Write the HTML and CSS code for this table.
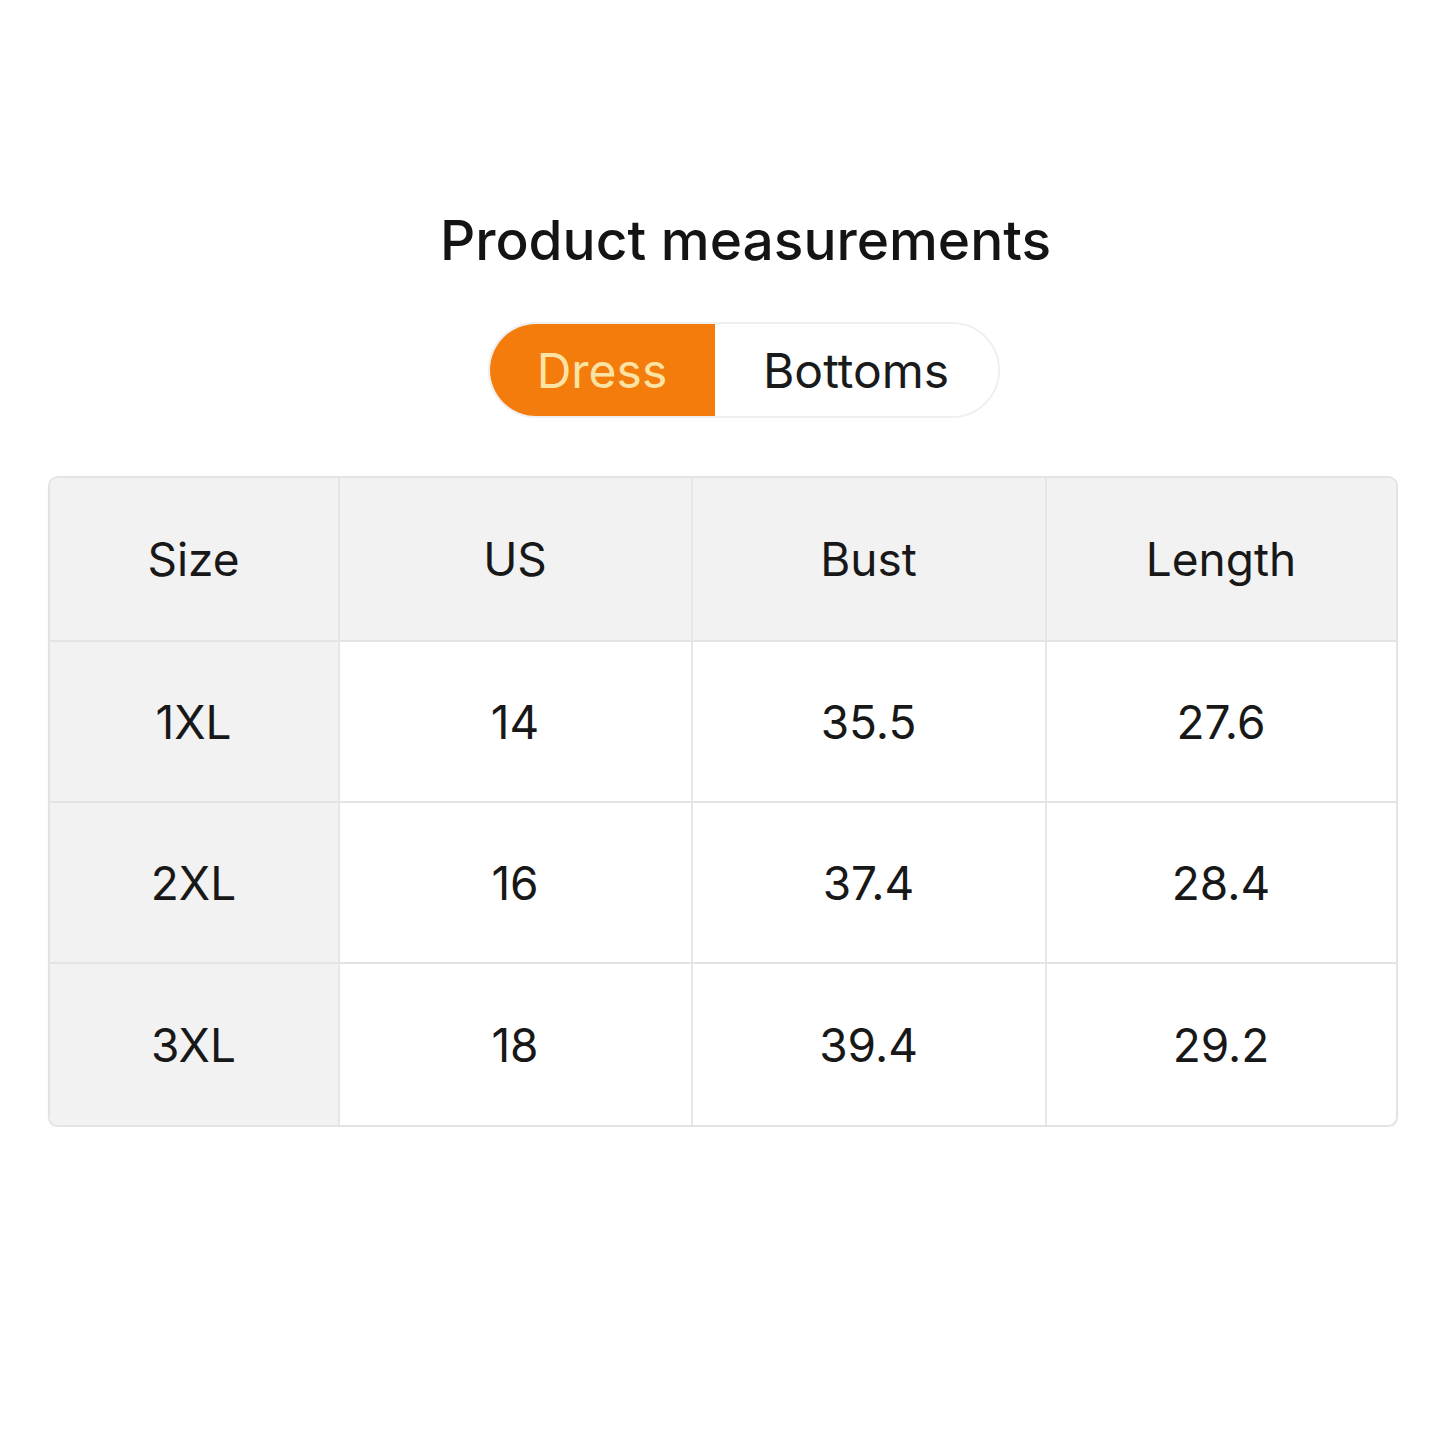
FILE: index.html
```html
<!DOCTYPE html>
<html>
<head>
<meta charset="utf-8">
<link rel="stylesheet" href="styles.css">
</head>
<body>
<main class="page">
  <h1 class="title">Product measurements</h1>
  <div class="toggle">
    <div class="seg seg-active">Dress</div>
    <div class="seg">Bottoms</div>
  </div>
  <div class="table">
    <div class="row head">
      <div class="cell first">Size</div>
      <div class="cell">US</div>
      <div class="cell">Bust</div>
      <div class="cell">Length</div>
    </div>
    <div class="row">
      <div class="cell first">1XL</div>
      <div class="cell">14</div>
      <div class="cell">35.5</div>
      <div class="cell">27.6</div>
    </div>
    <div class="row">
      <div class="cell first">2XL</div>
      <div class="cell">16</div>
      <div class="cell">37.4</div>
      <div class="cell">28.4</div>
    </div>
    <div class="row last">
      <div class="cell first">3XL</div>
      <div class="cell">18</div>
      <div class="cell">39.4</div>
      <div class="cell">29.2</div>
    </div>
  </div>
</main>
</body>
</html>
```

FILE: styles.css
```css
html, body {
  margin: 0;
  padding: 0;
  background: #ffffff;
}
body {
  font-family: Inter, "Noto Sans", "Liberation Sans", sans-serif;
  color: #161616;
}
.page {
  display: flex;
  flex-direction: column;
  align-items: center;
  padding-top: 204px;
}
.title {
  margin: 0 0 0 46px;
  font-size: 55px;
  font-weight: 500;
  line-height: 72px;
  color: #141414;
}
.toggle {
  margin-top: 46px;
  margin-left: 42px;
  display: flex;
  height: 96px;
  border-radius: 48px;
  border: 2px solid #efefef;
  overflow: hidden;
  box-sizing: border-box;
}
.seg {
  display: flex;
  align-items: center;
  justify-content: center;
  font-size: 48px;
  color: #1a1a1a;
  background: #fff;
  width: 283px;
}
.seg-active {
  width: 225px;
  background: #f47c0c;
  color: #fbe3a4;
}
.table {
  margin-top: 58px;
  width: 1350px;
  border: 2px solid #e3e3e3;
  border-radius: 10px;
  overflow: hidden;
  box-sizing: border-box;
  box-shadow: 0 1px 2px rgba(0,0,0,0.06);
}
.row {
  display: grid;
  grid-template-columns: 290px 353px 354px 1fr;
  height: 161px;
  border-bottom: 2px solid #e4e4e4;
  box-sizing: border-box;
}
.row.head {
  height: 164px;
  background: #f2f2f2;
}
.row.last {
  border-bottom: none;
}
.cell {
  display: flex;
  align-items: center;
  justify-content: center;
  font-size: 46px;
  color: #181818;
  border-right: 2px solid #e6e6e6;
}
.cell:last-child {
  border-right: none;
}
.cell.first {
  background: #f2f2f2;
}
```
